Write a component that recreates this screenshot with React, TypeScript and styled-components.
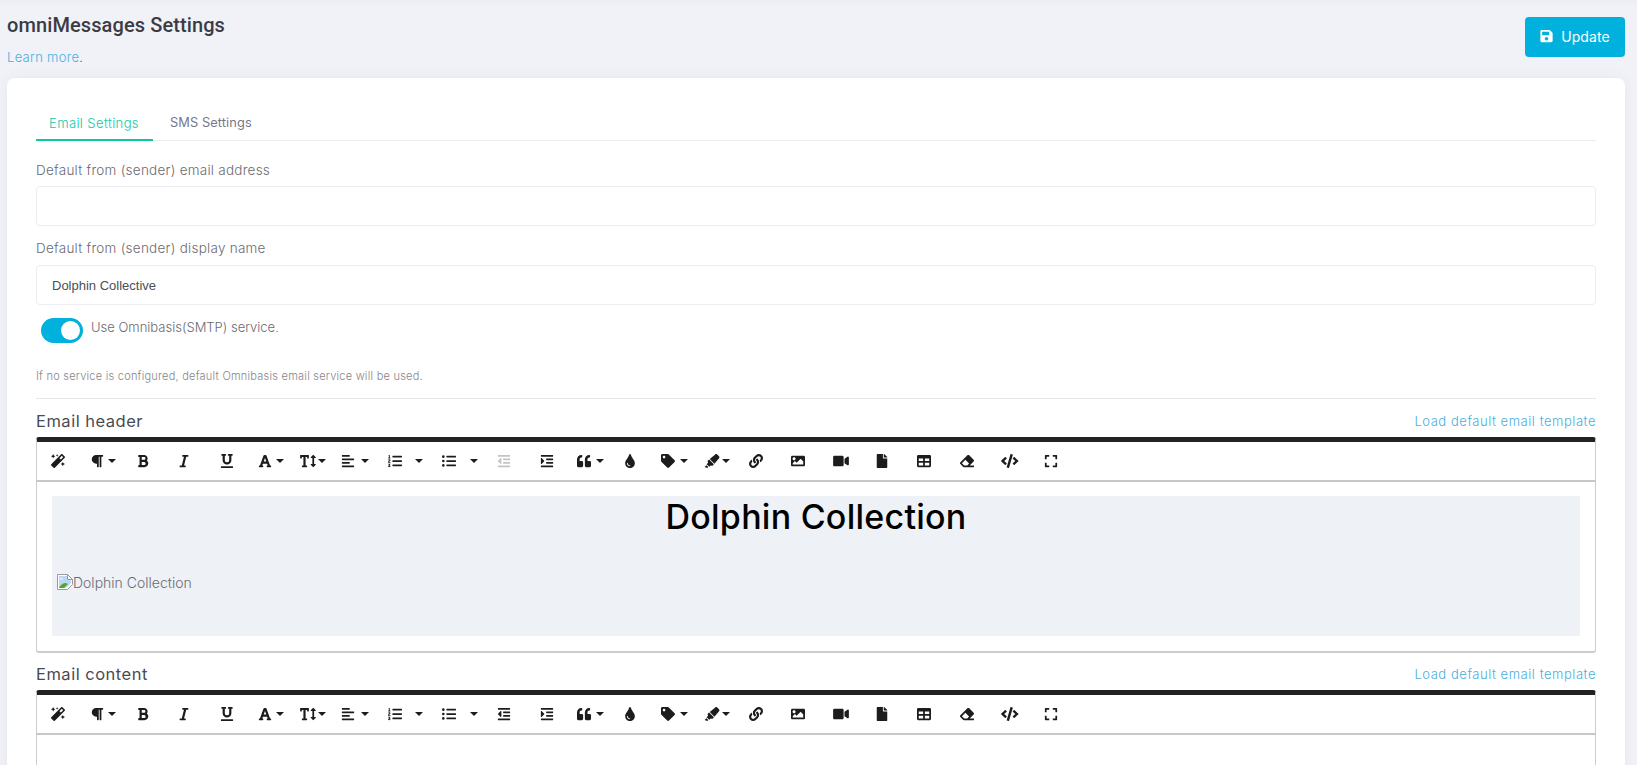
import React from 'react';
import styled, { createGlobalStyle } from 'styled-components';
import {
  FaMagic, FaParagraph, FaBold, FaItalic, FaUnderline, FaFont, FaTextHeight, FaAlignLeft,
  FaListOl, FaListUl, FaOutdent, FaIndent, FaQuoteLeft, FaTint, FaTag, FaHighlighter,
  FaLink, FaImage, FaVideo, FaFile, FaTable, FaEraser, FaCode, FaExpand, FaSave,
} from 'react-icons/fa';

const Global = createGlobalStyle`
  html, body { margin: 0; padding: 0; height: 100%; overflow: hidden; background: #f1f2f7; }
  * { box-sizing: border-box; }
`;

const Page = styled.div`
  height: 765px;
  overflow: hidden;
  padding: 0 12px 0 7px;
  background: #f1f2f7;
  box-shadow: inset 0 6px 6px -4px rgba(0, 0, 0, 0.03);
  font-family: Inter, "Open Sans", sans-serif;
  font-weight: 300;
`;

const Header = styled.header`
  height: 78px;
  display: flex;
  justify-content: space-between;
  align-items: flex-start;
`;

const HeaderText = styled.div`
  display: flex;
  flex-direction: column;
`;

const Title = styled.h1`
  margin: 13px 0 0;
  font: 500 20px/24px Roboto, sans-serif;
  letter-spacing: 0.1px;
  color: #3b3b45;
`;

const LearnLine = styled.p`
  margin: 10px 0 0;
  font-size: 13px;
  line-height: 20px;
  letter-spacing: 0.3px;
  color: #333;
`;

const Link = styled.a`
  color: #4aaee0;
`;

const UpdateButton = styled.button`
  margin-top: 17px;
  width: 100px;
  height: 40px;
  padding: 0 0 2px;
  border: 0;
  border-radius: 4px;
  background: #00b1dd;
  color: #fff;
  font-family: Inter, sans-serif;
  font-size: 14px;
  font-weight: 400;
  letter-spacing: 0.1px;
  display: flex;
  align-items: center;
  justify-content: center;
  gap: 8px;
  svg { width: 13px; height: 14px; }
`;

const Card = styled.main`
  height: 800px;
  padding: 27px 29px 0 29px;
  background: #fff;
  border-radius: 8px;
  box-shadow: 0 0 14px rgba(60, 60, 110, 0.06);
`;

const Tabs = styled.nav`
  display: flex;
  height: 36px;
  border-bottom: 1px solid #ebedf2;
  gap: 4px;
`;

const Tab = styled.a<{ $active?: boolean }>`
  height: 36px;
  padding: 1px ${p => (p.$active ? 14 : 13)}px 0 13px;
  display: flex;
  align-items: center;
  font-size: ${p => (p.$active ? 13 : 12.8)}px;
  letter-spacing: ${p => (p.$active ? 0.4 : 0.1)}px;
  font-weight: ${p => (p.$active ? 300 : 400)};
  color: ${p => (p.$active ? '#0dc8a5' : '#74788d')};
  border-bottom: 2px solid ${p => (p.$active ? '#0dc8a5' : 'transparent')};
`;

const Label = styled.label<{ $top: number; $bottom: number }>`
  display: block;
  margin: ${p => p.$top}px 0 ${p => p.$bottom}px;
  font-size: 13.5px;
  letter-spacing: 0.25px;
  line-height: 20px;
  color: #6b6b72;
`;

const Input = styled.input`
  display: block;
  width: 100%;
  height: 40px;
  padding: 0 15px;
  border: 1px solid #ebedf2;
  border-radius: 4px;
  font: 400 13px "Liberation Sans", Arial, sans-serif;
  color: #495057;
  outline: none;
`;

const ToggleRow = styled.div`
  display: flex;
  align-items: flex-start;
  gap: 8px;
  margin: 13px 0 0 5px;
`;

const Toggle = styled.span`
  position: relative;
  width: 42px;
  height: 25px;
  border-radius: 13px;
  background: #00b1dd;
  &::after {
    content: '';
    position: absolute;
    right: 3px;
    top: 3px;
    width: 19px;
    height: 19px;
    border-radius: 50%;
    background: #fff;
  }
`;

const ToggleText = styled.span`
  font-size: 13px;
  line-height: 18px;
  color: #6b6b72;
`;

const Help = styled.p`
  margin: 25px 0 0;
  font-size: 11px;
  letter-spacing: 0.24px;
  line-height: 16px;
  color: #85858c;
`;

const Rule = styled.hr`
  margin: 14px 0 0;
  border: 0;
  border-top: 1px solid #e4e6eb;
`;

const SectionHead = styled.div<{ $top: number }>`
  display: flex;
  justify-content: space-between;
  align-items: center;
  height: 24px;
  margin: ${p => p.$top}px 0 4px;
`;

const SectionTitle = styled.h2`
  margin: 0;
  font-size: 16.5px;
  font-weight: 400;
  letter-spacing: 0.5px;
  color: #4a4a53;
`;

const TemplateLink = styled.a`
  font-size: 13px;
  letter-spacing: 0.55px;
  color: #4aaee0;
`;

const Editor = styled.section`
  border: 1px solid #ccc;
  border-top: 5px solid #222;
  border-bottom-width: 2px;
  border-radius: 3px;
`;

const Toolbar = styled.div`
  display: flex;
  align-items: center;
  height: 38px;
  padding-left: 13px;
  border-bottom: 2px solid #c8c8c8;
  box-sizing: content-box;
`;

const ToolItem = styled.span<{ $w: number; $off?: boolean }>`
  flex: none;
  display: flex;
  align-items: center;
  width: ${p => p.$w}px;
  color: ${p => (p.$off ? '#c4c4c4' : '#1c1c1c')};
`;

const IconBox = styled.span<{ $iw: number }>`
  width: 16px;
  display: flex;
  justify-content: center;
  svg { width: ${p => p.$iw}px; height: 14px; display: block; flex: none; }
`;

const Caret = styled.i<{ $gap: number }>`
  margin-left: ${p => p.$gap}px;
  width: 0;
  height: 0;
  border-left: 4px solid transparent;
  border-right: 4px solid transparent;
  border-top: 4px solid #1c1c1c;
`;

const EditorBody = styled.div`
  padding: 14px 15px 15px;
`;

const EmptyBody = styled.div`
  height: 200px;
`;

const Banner = styled.div`
  height: 140px;
  padding: 0 5px;
  background: #eef1f6;
`;

const BannerTitle = styled.div`
  height: 42px;
  font-size: 34px;
  letter-spacing: 0.25px;
  line-height: 42px;
  font-weight: 450;
  text-align: center;
  color: #000;
`;

const BrokenImage = styled.div`
  margin-top: 36px;
  display: flex;
  align-items: center;
  height: 16px;
  font-size: 14px;
  color: #6b6b72;
  svg { flex: none; }
`;

type Tool = { icon: React.ComponentType; w: number; caret?: number; off?: boolean; iw?: number };

const tools = (outdentOff: boolean): Tool[] => [
  { icon: FaMagic, w: 39 },
  { icon: FaParagraph, w: 46, caret: 3 },
  { icon: FaBold, w: 41 },
  { icon: FaItalic, w: 43 },
  { icon: FaUnderline, w: 38 },
  { icon: FaFont, w: 43, caret: 3 },
  { icon: FaTextHeight, w: 40, caret: 2, iw: 16 },
  { icon: FaAlignLeft, w: 47, caret: 5 },
  { icon: FaListOl, w: 54, caret: 12 },
  { icon: FaListUl, w: 55, caret: 13 },
  { icon: FaOutdent, w: 43, off: outdentOff },
  { icon: FaIndent, w: 37 },
  { icon: FaQuoteLeft, w: 46, caret: 4 },
  { icon: FaTint, w: 38 },
  { icon: FaTag, w: 44, caret: 4 },
  { icon: FaHighlighter, w: 44, caret: 2, iw: 16 },
  { icon: FaLink, w: 42 },
  { icon: FaImage, w: 43 },
  { icon: FaVideo, w: 41, iw: 16 },
  { icon: FaFile, w: 42 },
  { icon: FaTable, w: 43 },
  { icon: FaEraser, w: 43 },
  { icon: FaCode, w: 41, iw: 17.5 },
  { icon: FaExpand, w: 30 },
];

const EditorToolbar = ({ outdentOff }: { outdentOff: boolean }) => (
  <Toolbar>
    {tools(outdentOff).map((t, i) => (
      <ToolItem key={i} $w={t.w} $off={t.off}>
        <IconBox $iw={t.iw ?? 14}><t.icon /></IconBox>
        {t.caret !== undefined && <Caret $gap={t.caret} />}
      </ToolItem>
    ))}
  </Toolbar>
);

const BrokenIcon = () => (
  <svg width="16" height="16" viewBox="0 0 16 16">
    <path d="M.5.5h10l5 5v5l-5 5H.5z" fill="#fff" stroke="#9a9a9a" />
    <path d="M2 2h8v4h4v3l-5 5H2z" fill="#bcd6f4" />
    <path d="M3 4.5h3v1H3z" fill="#fff" />
    <path d="M2 14c1-3 4-5 7-5l2 1-4 4z" fill="#4fa82b" />
    <path d="M10.5.5v5h5z" fill="#fff" stroke="#9a9a9a" />
  </svg>
);

export default function App() {
  return (
    <Page>
      <Global />
      <Header>
        <HeaderText>
          <Title>omniMessages Settings</Title>
          <LearnLine><Link>Learn more</Link>.</LearnLine>
        </HeaderText>
        <UpdateButton><FaSave />Update</UpdateButton>
      </Header>
      <Card>
        <Tabs>
          <Tab $active>Email Settings</Tab>
          <Tab>SMS Settings</Tab>
        </Tabs>
        <Label $top={19} $bottom={6}>Default from (sender) email address</Label>
        <Input />
        <Label $top={12} $bottom={7}>Default from (sender) display name</Label>
        <Input defaultValue="Dolphin Collective" />
        <ToggleRow>
          <Toggle />
          <ToggleText>Use Omnibasis(SMTP) service.</ToggleText>
        </ToggleRow>
        <Help>If no service is configured, default Omnibasis email service will be used.</Help>
        <Rule />
        <SectionHead $top={10}>
          <SectionTitle>Email header</SectionTitle>
          <TemplateLink>Load default email template</TemplateLink>
        </SectionHead>
        <Editor>
          <EditorToolbar outdentOff />
          <EditorBody>
            <Banner>
              <BannerTitle>Dolphin Collection</BannerTitle>
              <BrokenImage><BrokenIcon />Dolphin Collection</BrokenImage>
            </Banner>
          </EditorBody>
        </Editor>
        <SectionHead $top={9}>
          <SectionTitle>Email content</SectionTitle>
          <TemplateLink>Load default email template</TemplateLink>
        </SectionHead>
        <Editor>
          <EditorToolbar outdentOff={false} />
          <EmptyBody />
        </Editor>
      </Card>
    </Page>
  );
}
